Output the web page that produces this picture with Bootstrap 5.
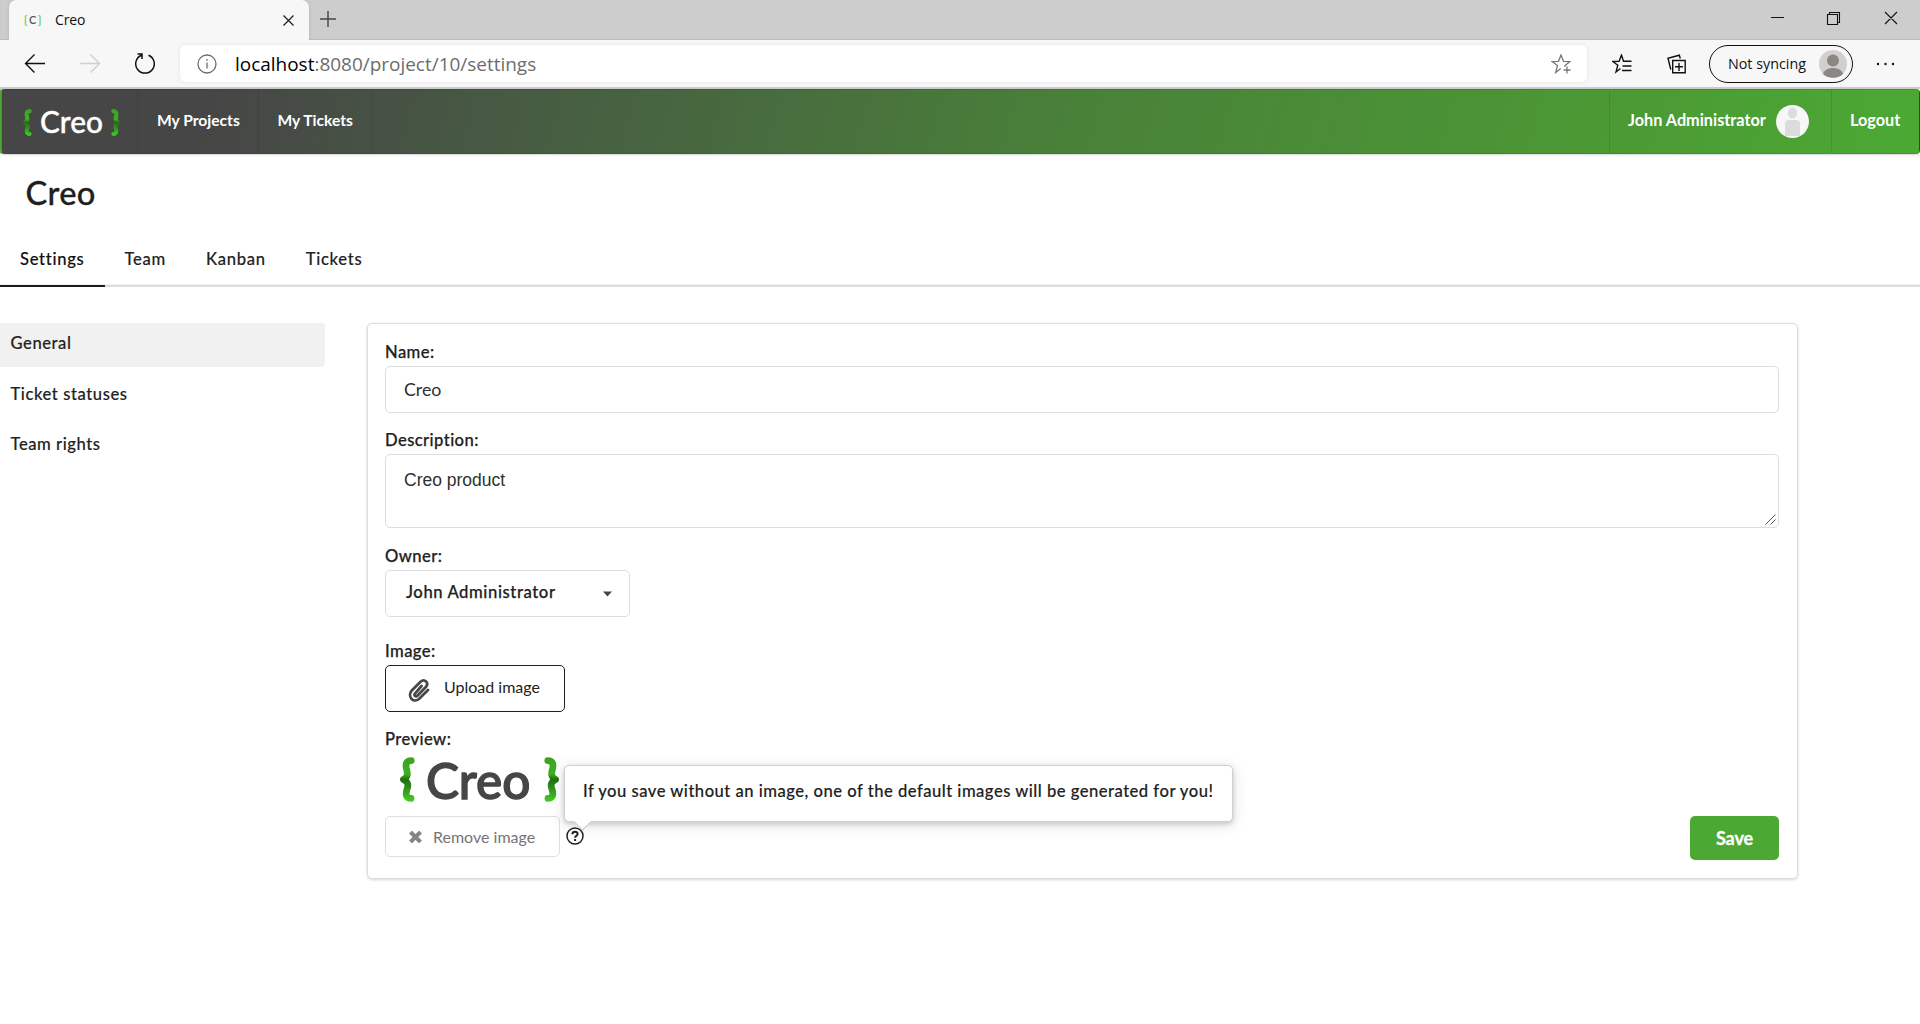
<!DOCTYPE html>
<html lang="en">
<head>
<meta charset="utf-8">
<meta name="viewport" content="width=device-width, initial-scale=1">
<title>Creo</title>
<link href="https://cdn.jsdelivr.net/npm/bootstrap@5.3.0/dist/css/bootstrap.min.css" rel="stylesheet">
<style>
body{font-family:Lato,"Liberation Sans",sans-serif;font-size:16px;color:#212121;background:#fff;overflow:hidden;height:1024px}
svg{display:block;flex:none}
/* browser window */
.chrome-ui{font-family:"Open Sans","Noto Sans",sans-serif;color:#111}
.tab-strip{height:40px;background:#cdcdcd;padding-left:9px;box-shadow:inset 0 -1px 1px #bdbdbd}
.chrome-tab{width:300px;height:40px;background:#f7f7f7;border-radius:7px 7px 0 0;padding:0 15px 1px 15px;font-size:14px;box-shadow:0 0 3px #aaa;letter-spacing:-.1px}
.favicon-txt{font:600 11px Lato,sans-serif;color:#555;width:18px;letter-spacing:1.6px}
.favicon-txt b{color:#6fd455;font-weight:700}
.toolbar-row{height:47px;background:#f7f7f7;padding-left:24px;position:relative}
.address{width:1407px;height:37px;margin-left:25px;background:#fff;border-radius:6px;box-shadow:0 0 4px #e4e4e4;padding:0 16px 0 17px;font-size:18.97px;color:#6d6d6d}
.sync-pill{width:144px;height:38px;border:1.5px solid #111;border-radius:19px;font-size:14.3px;padding:0 5px 0 18px}
.page-edge{height:2px;background:#cbcbcb}
/* site navigation */
.site-nav{height:65px;margin-left:1px;border-radius:4px;background:linear-gradient(105deg,#464646 0,#464646 11%,#475f42 30%,#498039 55%,#4b9635 80%,#4ba933 100%);border:1px solid rgba(34,36,38,.15);box-shadow:-2px 0 0 #4ba933,0 1px 2px rgba(34,36,38,.2);font-weight:700;font-size:15.6px}
.site-nav a{color:#fff;text-decoration:none;height:63px;display:flex;align-items:center;border-color:rgba(34,36,38,.14)!important;padding-bottom:2px}
.nav-l{border-right:1px solid}
.nav-r{border-left:1px solid;font-size:16.25px}
.logo-sm{font-size:29.8px;font-weight:500;line-height:34px;-webkit-text-stroke:.4px #fff}
.site-nav .brand-link{width:135.5px;padding:1px 0 0 21px;gap:8px}
/* page */
.page-title{font-size:32.7px;font-weight:500;line-height:40px;margin:19px 0 0 25.5px;letter-spacing:.3px;color:#1f1f1f;-webkit-text-stroke:.3px #1f1f1f}
.page-tabs{margin-top:22px;border-bottom:2px solid #dcdcdc;height:52px;box-shadow:inset 0 -1px #f1f1f1}
.page-tabs a{display:block;height:52px;line-height:48px;padding:0 20px;color:#222;font-size:16.6px;font-weight:500;-webkit-text-stroke:.15px currentColor;letter-spacing:.7px;text-decoration:none;border-bottom:2px solid transparent}
.page-tabs .active{color:#111;border-color:#1b1c1d}
.side-menu{width:325px;gap:6.6px}
.side-menu a{height:44px;line-height:41px;padding-left:10.5px;color:#222;font-size:16.6px;font-weight:500;-webkit-text-stroke:.15px currentColor;letter-spacing:.56px;text-decoration:none;border-radius:0 4px 4px 0}
.side-menu .active{background:#f1f1f1}
.settings-card{width:1431px;height:556px;margin-left:42px;border:1px solid #dcdcdd;border-radius:5px;box-shadow:0 1px 3px rgba(0,0,0,.16);padding:16px 18px 17px 17px}
.field-label{line-height:24px;font-size:16.6px;font-weight:500;-webkit-text-stroke:.25px currentColor;letter-spacing:.42px;margin-bottom:2px;color:#222;display:block}
.settings-card .form-control{border-color:#dcdddd;border-radius:5px;padding:0 18px;color:#303030}
.settings-card .name-in{height:47px;font-size:17.8px;margin-bottom:15px;padding-bottom:1px}
.desc-wrap{height:74px;margin-bottom:16px}
.settings-card .desc-in{height:74px;min-height:0;font:17.5px/24px "Liberation Sans",sans-serif;padding-top:13px;resize:none}
.grip{position:absolute;right:3px;bottom:3px}
.owner-sel{width:245px;height:47px;border:1px solid #dcdddd;border-radius:5px;padding:0 17px 3px 20px;font-size:16.6px;font-weight:500;-webkit-text-stroke:.25px currentColor;letter-spacing:.6px;margin-bottom:22px}
.upload-btn{width:180px;height:47px;border:1px solid #1f1f1f;border-radius:5px;padding:0 0 3px 22px;color:#222;margin-bottom:15px;gap:14px}
.preview-logo{height:63px;padding:4px 0 0 15px;font-size:49.5px;font-weight:500;-webkit-text-stroke:1.4px #464646;line-height:46px;color:#464646;align-items:flex-start}
.remove-btn{width:175px;height:41px;border:1px solid #dedfdf;border-radius:5px;padding:0 0 0 23px;color:#757575;gap:11px}
.help-mark{margin:11px 0 0 6px;width:18px;height:18px}
.tip-box{position:absolute;left:-2px;bottom:23.5px;width:669px;height:57px;border:1px solid #d0d0d0;border-radius:5px;background:#fff;box-shadow:0 2px 5px rgba(34,36,38,.2),0 3px 16px rgba(34,36,38,.13);line-height:50px;padding-left:18px;font-size:16.6px;font-weight:500;-webkit-text-stroke:.15px currentColor;letter-spacing:.49px;white-space:nowrap}
.tip-box::after{content:"";position:absolute;left:11px;bottom:-7.5px;width:13px;height:13px;background:#fff;border:solid #c8c8c8;border-width:0 1px 1px 0;transform:rotate(45deg)}
.save-btn{width:89px;height:44px;background:#4ba933;border-radius:5px;color:#fff;font-weight:700;-webkit-text-stroke:.3px #fff;font-size:18px;letter-spacing:-.1px;padding:0}
</style>
<script src="https://cdn.jsdelivr.net/npm/bootstrap@5.3.0/dist/js/bootstrap.bundle.min.js"></script>
</head>
<body>
<svg width="0" height="0" class="position-absolute">
  <defs>
    <linearGradient id="leaf" gradientUnits="userSpaceOnUse" x1="0" y1="0" x2="0" y2="45">
      <stop offset="0" stop-color="#39a31f"/><stop offset=".38" stop-color="#3fb022"/><stop offset=".5" stop-color="#236d14"/><stop offset=".66" stop-color="#2f8a1a"/><stop offset="1" stop-color="#46d024"/>
    </linearGradient>
    <symbol id="brace" viewBox="0 0 15 45"><path d="M11.2 3.6C6.3 3.6 5.5 7 6.3 11C7.4 15.5 9 19.500 3.500 22.500C9 25.500 8.500 29 6.800 33C5.500 37.500 6 41.400 11 41.400" fill="none" stroke="url(#leaf)" stroke-width="6.800" stroke-linecap="round" stroke-linejoin="round"/></symbol>
  </defs>
</svg>

<div class="chrome-ui">
  <div class="tab-strip d-flex">
    <div class="chrome-tab d-flex align-items-center">
      <span class="favicon-txt text-nowrap"><b>{</b>C<b>}</b></span><span style="margin-left:13px">Creo</span>
      <svg class="ms-auto" style="margin-top:1px" width="11" height="11" stroke="#222" stroke-width="1.300"><path d="M.5.5l10 10M10.500.5l-10 10"/></svg>
    </div>
    <svg class="ms-2" style="margin-top:11px" width="22" height="16" stroke="#444" stroke-width="1.400"><path d="M3 8h16M11 0v16"/></svg>
    <svg class="ms-auto" style="margin-top:11px" width="149" height="15" fill="none" stroke="#111" stroke-width="1.100"><path d="M0 6.500h13M56.500 3.500h10v10h-10zM58.500 3V1.500h10v10H67M114 1l12 12M126 1l-12 12"/></svg>
  </div>
  <div class="toolbar-row d-flex align-items-center">
    <svg width="131" height="24" fill="none" stroke-width="1.400">
      <path stroke="#111" d="M1.500 11.500H21M10.500 2.500l-9 9 9 9"/>
      <path stroke="#cfcfcf" d="M56 11.500h19.500M66.500 2.500l9 9-9 9"/>
      <path stroke="#111" stroke-width="1.500" d="M124.500 3.200A9.300 9.300 0 1 1 117.500 3.200M113.500 2h4.500v5"/>
    </svg>
    <div class="address d-flex align-items-center">
      <svg width="20" height="20" fill="none" stroke="#6d6d6d" stroke-width="1.300"><circle cx="10" cy="10" r="9"/><path d="M10 8.500v6M10 5v1.800"/></svg>
      <span style="margin:1px 0 0 18px"><span class="text-black">localhost</span>:8080/project/10/settings</span>
      <svg class="ms-auto" width="20" height="20" fill="none" stroke="#777" stroke-width="1.300"><path d="M9.800 14.600L4.700 18.500l1.800-7L1 7.500l6.500-.2L10 1l2.500 6.300 6.500.2-5.200 4.200.3 1.200M16 12.500v7M12.500 16h7"/></svg>
    </div>
    <svg style="margin-left:25px" width="20" height="20" fill="none" stroke="#111" stroke-width="1.400"><path d="M8.500 14.500L4 18l1.800-6.700L.8 7.500l6.300-.2L9.500 1l2 6.200H19.500M10.500 12h9M10 16.500h9.500"/></svg>
    <svg style="margin-left:35px" width="20" height="20" fill="none" stroke="#111" stroke-width="1.400"><path d="M5.700 6.500h12.500v12.300H5.700zM12 9v8M8 12.800h8M3.800 15.500L1 4.200l11.300-3 1 3.300"/></svg>
    <div class="sync-pill d-flex align-items-center justify-content-between" style="margin-left:22px"><span>Not syncing</span>
      <svg width="28" height="28" viewBox="0 0 28 28"><circle cx="14" cy="14" r="14" fill="#d2d0ce"/><circle cx="14" cy="10.500" r="6" fill="#8b8783"/><path d="M4 24c2-8 18-8 20 0-5 5-15 5-20 0z" fill="#8b8783"/></svg>
    </div>
    <svg style="margin-left:22px" width="20" height="6" fill="#111"><circle cx="3" cy="3" r="1.200"/><circle cx="10.500" cy="3" r="1.200"/><circle cx="18" cy="3" r="1.200"/></svg>
  </div>
  <div class="page-edge"></div>
</div>

<nav class="site-nav d-flex">
  <a href="#" class="nav-l brand-link"><svg width="9" height="27"><use href="#brace"/></svg><span class="logo-sm">Creo</span><svg width="9" height="27" style="transform:scaleX(-1)"><use href="#brace"/></svg></a>
  <a href="#" class="nav-l" style="width:121px;padding-left:19.500px">My Projects</a>
  <a href="#" class="nav-l" style="width:113px;padding-left:19px">My Tickets</a>
  <a href="#" class="nav-r ms-auto" style="width:222px;padding-left:18px">John Administrator
    <svg style="margin:2px 0 0 10px" width="33" height="33" viewBox="0 0 33 33"><circle cx="16.500" cy="16.500" r="16.500" fill="#f7f7f7"/><ellipse cx="16.500" cy="8" rx="4.500" ry="5.500" fill="#dcdcdc"/><path d="M9 31V19q0-4 4-4h7q4 0 4 4v12z" fill="#dcdcdc"/></svg></a>
  <a href="#" class="nav-r" style="width:88px;padding-left:18px">Logout</a>
</nav>

<h1 class="page-title">Creo</h1>
<div class="page-tabs d-flex"><a href="#" class="active">Settings</a><a href="#">Team</a><a href="#">Kanban</a><a href="#">Tickets</a></div>

<main class="d-flex align-items-start" style="padding-top:36px">
  <nav class="side-menu d-flex flex-column"><a href="#" class="active">General</a><a href="#">Ticket statuses</a><a href="#">Team rights</a></nav>
  <form class="settings-card">
    <label class="field-label">Name:</label>
    <input class="form-control name-in" value="Creo">
    <label class="field-label">Description:</label>
    <div class="desc-wrap position-relative">
      <textarea class="form-control desc-in">Creo product</textarea>
      <svg class="grip" width="11" height="11" stroke="#555" stroke-width="1"><path d="M.5 10.500l10-10M5.500 10.500l5-5"/></svg>
    </div>
    <label class="field-label">Owner:</label>
    <div class="owner-sel d-flex align-items-center justify-content-between">John Administrator<svg style="margin-top:3px" width="9" height="6" fill="#444"><path d="M0 .5h9L4.500 5.500z"/></svg></div>
    <label class="field-label">Image:</label>
    <div class="upload-btn d-flex align-items-center">
      <svg style="margin-top:6px" width="22" height="25" fill="none" stroke="#464646" stroke-width="2.700" stroke-linecap="round"><path d="M13.500 8L7 15.500c-1.500 2 .8 3.800 2.400 2.200L17.800 9c3.600-4-1.200-9-5.300-5.200L3.800 12.500C-1 18 5 25.800 11 21l9-9"/></svg>
      <span>Upload image</span></div>
    <label class="field-label">Preview:</label>
    <div class="preview-logo d-flex"><svg width="15" height="45"><use href="#brace"/></svg><span style="margin-left:11px;width:117.500px">Creo</span><svg width="15" height="45" style="transform:scaleX(-1)"><use href="#brace"/></svg></div>
    <div class="d-flex align-items-start">
      <div class="remove-btn d-flex align-items-center"><svg width="13" height="12" stroke="#858585" stroke-width="4"><path d="M1.500 1l10 10M11.500 1l-10 10"/></svg><span>Remove image</span></div>
      <div class="help-mark position-relative">
        <svg width="18" height="18" fill="none" stroke="#222" stroke-width="1.500"><circle cx="9" cy="9" r="8"/><path stroke-width="2" d="M6.300 7.200C6.500 3.800 11.700 4 11.600 7c0 1.700-2.500 1.800-2.500 3.700M9.100 12v2"/></svg>
        <div class="tip-box">If you save without an image, one of the default images will be generated for you!</div>
      </div>
      <button type="button" class="btn save-btn ms-auto">Save</button>
    </div>
  </form>
</main>
</body>
</html>
